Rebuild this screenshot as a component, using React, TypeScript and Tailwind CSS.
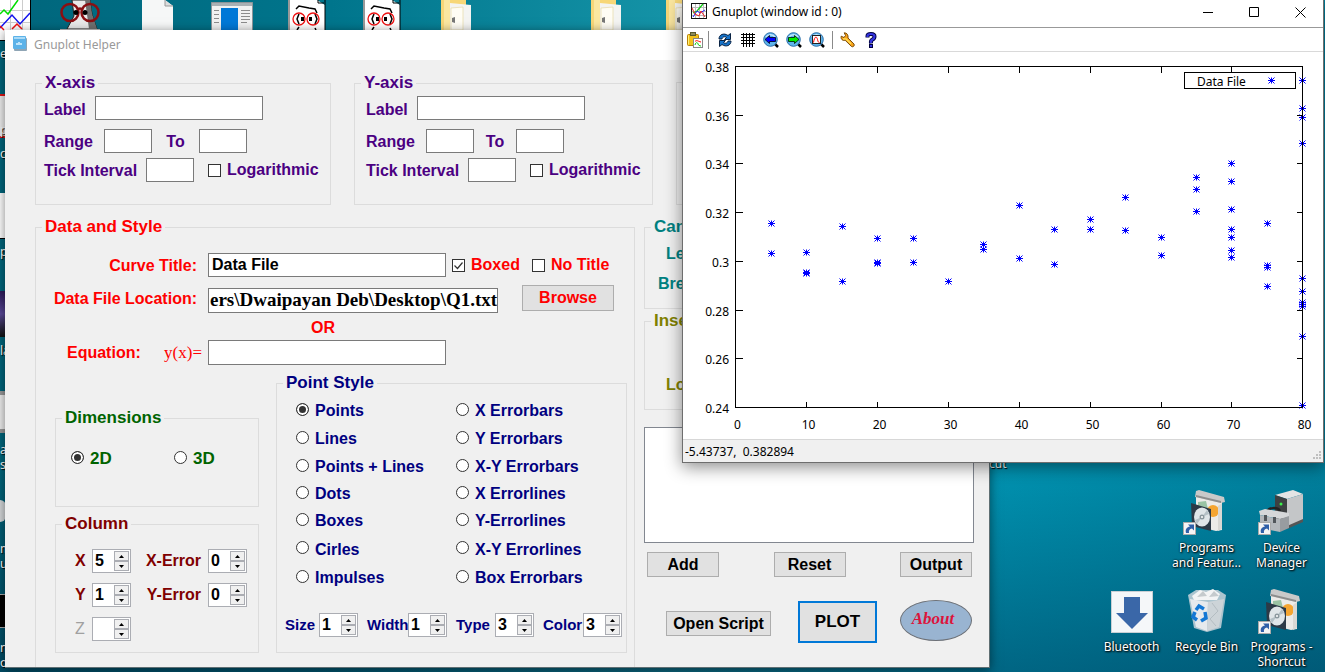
import { useState } from 'react'
import type { ReactNode } from 'react'
import { clsx } from 'clsx'

type Point = [x: number, y: number]

const DATA: Point[] = [
  [5, 0.3155], [5, 0.3032],
  [10, 0.3036], [10, 0.2954], [10, 0.295],
  [15, 0.3143], [15, 0.2917],
  [20, 0.3094], [20, 0.2995], [20, 0.2991],
  [25, 0.3094], [25, 0.2995],
  [30, 0.2917],
  [35, 0.3069], [35, 0.3049],
  [40, 0.3229], [40, 0.3012],
  [45, 0.3131], [45, 0.2987],
  [50, 0.3172], [50, 0.3131],
  [55, 0.3262], [55, 0.3127],
  [60, 0.3098], [60, 0.3024],
  [65, 0.3344], [65, 0.3295], [65, 0.3205],
  [70, 0.3402], [70, 0.3328], [70, 0.3213], [70, 0.3131], [70, 0.3098], [70, 0.3045], [70, 0.3016],
  [75, 0.3155], [75, 0.2983], [75, 0.2975], [75, 0.2897],
  [80, 0.3743], [80, 0.3628], [80, 0.3591], [80, 0.3484], [80, 0.293], [80, 0.2876],
  [80, 0.2831], [80, 0.2823], [80, 0.2815], [80, 0.2691], [80, 0.2408],
]

const X_TICKS = [0, 10, 20, 30, 40, 50, 60, 70, 80]
const Y_TICKS = [0.24, 0.26, 0.28, 0.3, 0.32, 0.34, 0.36, 0.38]

// Plot area inside the 640x387 canvas
const LEFT = 52.5
const RIGHT = 619.5
const TOP = 14.5
const BOTTOM = 355.5

// Both snap to pixel centres so the lines stay sharp
const toX = (v: number) => Math.round(LEFT - 0.15 + (v / 80) * (RIGHT - LEFT)) + 0.5
const toY = (v: number) => Math.round(BOTTOM - 0.5 - ((v - 0.24) / 0.14) * (BOTTOM - TOP)) + 0.5

const POINT_STYLES = [
  'Points', 'X Errorbars',
  'Lines', 'Y Errorbars',
  'Points + Lines', 'X-Y Errorbars',
  'Dots', 'X Errorlines',
  'Boxes', 'Y-Errorlines',
  'Cirles', 'X-Y Errorlines',
  'Impulses', 'Box Errorbars',
]

const SANS = "font-['Liberation_Sans',sans-serif]"
const UI = "font-['Noto_Sans','Open_Sans',sans-serif]"
const FIELD = 'border border-[#7a7a7a] bg-white px-[3px] text-base text-black outline-none'

/* ---------- form controls ---------- */

function Group({ title, className, children }: { title: string; className?: string; children?: ReactNode }) {
  return (
    <fieldset className={clsx('min-w-0 border border-[#dcdcdc]', className)}>
      <legend className="ml-[6px] px-[3px] text-[17px] leading-[20px] whitespace-nowrap">{title}</legend>
      {children}
    </fieldset>
  )
}

function Check({ label, defaultChecked, className }: { label: string; defaultChecked?: boolean; className?: string }) {
  return (
    <label className={clsx('flex items-center gap-[6px] whitespace-nowrap', className)}>
      <span className="grid">
        <input
          type="checkbox"
          defaultChecked={defaultChecked}
          className="peer col-start-1 row-start-1 size-[13px] appearance-none border border-[#333] bg-white"
        />
        <svg
          viewBox="0 0 13 13"
          className="pointer-events-none invisible col-start-1 row-start-1 size-[13px] peer-checked:visible"
          fill="none"
          stroke="#333"
          strokeWidth="1.2"
        >
          <path d="M2.5 6.5l3 3 5-6" />
        </svg>
      </span>
      {label}
    </label>
  )
}

function Radio({ name, label, defaultChecked, className }: { name: string; label: string; defaultChecked?: boolean; className?: string }) {
  return (
    <label className={clsx('flex items-center gap-[6px] whitespace-nowrap', className)}>
      <input
        type="radio"
        name={name}
        defaultChecked={defaultChecked}
        className="mb-1 size-[13px] appearance-none rounded-full border border-[#333] bg-white checked:bg-[#333] checked:shadow-[inset_0_0_0_2px_white]"
      />
      {label}
    </label>
  )
}

function Spinner({ id, initial }: { id: string; initial: number | null }) {
  const [value, setValue] = useState<number | null>(initial)
  const step = (d: number) => setValue((v) => Math.max(0, (v ?? 0) + d))
  return (
    <div className="flex h-6 w-[39px] border border-[#abadb3] bg-white">
      <input
        id={id}
        type="text"
        value={value ?? ''}
        onChange={(e) => setValue(Number(e.target.value) || 0)}
        className="w-0 min-w-0 flex-1 pl-[2px] text-base text-black outline-none"
      />
      <div className="flex w-4 flex-col py-px pr-px">
        {[1, -1].map((d) => (
          <button
            key={d}
            aria-label={d > 0 ? 'Increase' : 'Decrease'}
            onClick={() => step(d)}
            className="grid flex-1 place-items-center border border-[#abadb3] bg-[#f0f0f0]"
          >
            <svg viewBox="0 0 5 3" className="h-[3px] w-[5px]">
              <path d={d > 0 ? 'M0 3L2.500 0L5 3z' : 'M0 0L2.500 3L5 0z'} fill="#000" />
            </svg>
          </button>
        ))}
      </div>
    </div>
  )
}

function PushButton({ children, className }: { children: ReactNode; className?: string }) {
  return (
    <button className={clsx('border border-[#adadad] bg-[#e1e1e1] whitespace-nowrap', className)}>{children}</button>
  )
}

function AxisGroup({ axis, className, padClass, gapClass }: { axis: string; className: string; padClass: string; gapClass: string }) {
  return (
    <Group title={`${axis}-axis`} className={clsx('text-[#4b0082]', className)}>
      <div className={padClass}>
        <div className="mt-[3px] flex h-6 items-center">
          <label htmlFor={`${axis}-label`} className="w-[51px] pt-[3px]">Label</label>
          <input id={`${axis}-label`} type="text" className={clsx(FIELD, 'h-6 w-[168px]')} />
        </div>
        <div className="mt-[9px] flex h-6 items-center">
          <label htmlFor={`${axis}-from`} className="w-[60px] pt-[2px]">Range</label>
          <input id={`${axis}-from`} type="text" className={clsx(FIELD, 'h-6 w-12')} />
          <label htmlFor={`${axis}-to`} className={clsx('pt-[2px] text-center', gapClass)}>To</label>
          <input id={`${axis}-to`} type="text" className={clsx(FIELD, 'h-6 w-12')} />
        </div>
        <div className="mt-[5px] flex h-6 items-center">
          <label htmlFor={`${axis}-tick`} className="w-[102px] pt-[2px] whitespace-nowrap">Tick Interval</label>
          <input id={`${axis}-tick`} type="text" className={clsx(FIELD, 'h-6 w-12')} />
          <Check label="Logarithmic" className="ml-[14px]" />
        </div>
      </div>
    </Group>
  )
}

function ColumnRow({ axis, value, error }: { axis: string; value: number | null; error?: number }) {
  return (
    <div className="flex h-6 items-center">
      <label htmlFor={`col-${axis}`} className={clsx('w-[17px]', value === null && 'font-normal text-[#a0a0a0]')}>
        {axis}
      </label>
      <Spinner id={`col-${axis}`} initial={value} />
      {error !== undefined && (
        <>
          <label htmlFor={`err-${axis}`} className="w-[77px] pr-[7px] text-right whitespace-nowrap">{axis}-Error</label>
          <Spinner id={`err-${axis}`} initial={error} />
        </>
      )}
    </div>
  )
}

/* ---------- Gnuplot Helper window ---------- */

function HelperWindow() {
  return (
    <section
      className={clsx(
        'absolute top-[30px] left-[5px] flex h-[638px] w-[985px] flex-col overflow-hidden border-r border-b border-[#5f6f73] bg-[#f0f0f0] text-base font-bold leading-5 shadow-[0_2px_10px_rgba(0,0,0,0.5)]',
        SANS,
      )}
    >
      <header className={clsx('flex h-[30px] shrink-0 items-center bg-white pl-2 text-[12px] font-normal text-[#999]', UI)}>
        <svg viewBox="0 0 15 15" className="-mt-[3px] mr-[6px] size-[15px]">
          <rect x="1" y="2" width="13" height="13" rx="1" fill="#8fa5b5" />
          <rect x="0" y="0" width="13" height="13" rx="1" fill="#5cb2e8" />
          <rect x="1" y="1" width="11" height="2" fill="#a9daf7" />
          <path d="M3 9V7h2V6h2v1h2v2z" fill="#bfe4fa" />
        </svg>
        Gnuplot Helper
      </header>

      <div className="flex min-h-0 flex-1 flex-col pt-[13px] pl-[30px]">
        <div className="flex h-[132px] shrink-0">
          <AxisGroup axis="X" className="w-[296px]" padClass="pl-2" gapClass="w-[47px]" />
          <AxisGroup axis="Y" className="ml-[23px] w-[299px]" padClass="pl-[11px]" gapClass="w-[42px]" />
          <fieldset aria-label="Z-axis" className="mt-[9px] ml-[23px] w-[299px] border border-[#dcdcdc]" />
        </div>

        <div className="mt-3 flex min-h-0 flex-1">
          <Group title="Data and Style" className="w-[600px] border-b-0 text-[#ff0000]">
            <div className="mt-4 flex h-6 items-center">
              <label htmlFor="curve" className="w-[172px] pt-[2px] pr-[11px] text-right">Curve Title:</label>
              <input id="curve" type="text" defaultValue="Data File" className={clsx(FIELD, 'h-6 w-[238px] font-bold')} />
              <Check label="Boxed" defaultChecked className="ml-[6px]" />
              <Check label="No Title" className="ml-[12px]" />
            </div>
            <div className="mt-2 flex h-7">
              <label htmlFor="file" className="w-[172px] pt-[4px] pr-[11px] text-right">Data File Location:</label>
              <input
                id="file"
                type="text"
                defaultValue={'ers\\Dwaipayan Deb\\Desktop\\Q1.txt'}
                className="h-[25px] w-[290px] self-end border border-[#7a7a7a] bg-white pb-[2px] pl-px font-['Liberation_Serif',serif] text-[19px] leading-[20px] font-bold text-black outline-none"
              />
              <PushButton className="ml-6 h-[26px] w-[92px]">Browse</PushButton>
            </div>
            <p className="mt-[5px] h-5 pl-[275px]">OR</p>
            <div className="mt-[2px] flex h-[25px] items-center">
              <label htmlFor="equation" className="flex w-[172px] items-center justify-between pr-[6px] pl-[31px]">
                <span>Equation:</span>
                <span className="font-['Liberation_Serif',serif] text-[17px] font-normal">y(x)=</span>
              </label>
              <input id="equation" type="text" className={clsx(FIELD, 'h-[25px] w-[238px]')} />
            </div>

            <div className="mt-2 flex gap-[17px] pl-[19px]">
              <div className="flex w-[204px] flex-col gap-[7px] pt-[35px]">
                <Group title="Dimensions" className="h-[99px] text-[#006400]">
                  <div className="mt-[21px] flex h-5 items-center pl-[15px] text-[17px]">
                    <Radio name="dim" label="2D" defaultChecked className="w-[103px]" />
                    <Radio name="dim" label="3D" />
                  </div>
                </Group>
                <Group title="Column" className="h-[139px] text-[#800000]">
                  <div className="mt-[15px] flex flex-col gap-[10px] pl-[19px]">
                    <ColumnRow axis="X" value={5} error={0} />
                    <ColumnRow axis="Y" value={1} error={0} />
                    <ColumnRow axis="Z" value={null} />
                  </div>
                </Group>
              </div>

              <Group title="Point Style" className="h-[280px] w-[351px] text-[#000080]">
                <div className="mt-1 grid grid-cols-[160px_1fr] grid-rows-[28px_28px_28px_26px_28px_29px_28px] items-center pl-[19px]">
                  {POINT_STYLES.map((s, i) => (
                    <Radio key={s} name="style" label={s} defaultChecked={i === 0} />
                  ))}
                </div>
                <div className="mt-[21px] flex h-6 items-center gap-[9px] pl-2">
                  <div className="flex items-center">
                    <label htmlFor="size" className="w-[34px] text-[15px]">Size</label>
                    <Spinner id="size" initial={1} />
                  </div>
                  <div className="flex items-center">
                    <label htmlFor="width" className="w-[41px] text-[15px]">Width</label>
                    <Spinner id="width" initial={1} />
                  </div>
                  <div className="flex items-center">
                    <label htmlFor="type" className="w-[39px] text-[15px]">Type</label>
                    <Spinner id="type" initial={3} />
                  </div>
                  <div className="flex items-center">
                    <label htmlFor="color" className="w-[40px] text-[15px]">Color</label>
                    <Spinner id="color" initial={3} />
                  </div>
                </div>
              </Group>
            </div>
          </Group>

          <div className="ml-[9px] w-[330px]">
            <Group title="Can" className="h-[92px] text-[#008080]">
              <p className="mt-[7px] pl-[21px]">Len</p>
              <p className="mt-[10px] pl-[13px]">Brea</p>
            </Group>
            <Group title="Inse" className="mt-[2px] h-[99px] text-[#808000]">
              <p className="mt-[44px] pl-[21px]">Loc</p>
            </Group>
            <textarea aria-label="Curves" className="mt-[17px] block h-[116px] w-full resize-none border border-[#828790] bg-white outline-none" />
            <div className="mt-[9px] flex justify-between pr-[2px] pl-[3px]">
              <PushButton className="h-[25px] w-[72px]">Add</PushButton>
              <PushButton className="h-[25px] w-[72px]">Reset</PushButton>
              <PushButton className="h-[25px] w-[72px]">Output</PushButton>
            </div>
            <div className="mt-[23px] flex items-end pl-[22px]">
              <PushButton className="mb-[7px] h-[25px] w-[105px]">Open Script</PushButton>
              <button className="ml-[27px] h-[42px] w-[79px] border-2 border-[#0078d7] bg-[#e1e1e1] text-[17px]">PLOT</button>
              <button className="mb-[2px] ml-[23px] h-[41px] w-[72px] rounded-[50%] border border-[#6d7177] bg-[#99b4d1] pr-[6px] pb-1 font-['Liberation_Serif',serif] text-[17px] italic text-[#dc143c]">
                About
              </button>
            </div>
          </div>
        </div>
      </div>
    </section>
  )
}

/* ---------- Gnuplot graph window ---------- */

function Star({ x, y }: { x: number; y: number }) {
  return <path transform={`translate(${x} ${y})`} d="M-3.500 0h7M0-3v6M-3-3L3 3M-3 3L3-3" stroke="#00f" fill="none" />
}

function Plot() {
  return (
    <svg viewBox="0 0 640 387" className={clsx('block w-full bg-white text-[12px]', UI)}>
      {DATA.map(([x, y], i) => (
        <Star key={i} x={toX(x)} y={toY(y)} />
      ))}
      <g stroke="#000" fill="none" shapeRendering="crispEdges">
        <rect x={LEFT} y={TOP} width={RIGHT - LEFT} height={BOTTOM - TOP} />
        {X_TICKS.map((t) => (
          <path key={t} d={`M${toX(t)} ${BOTTOM}v-6M${toX(t)} ${TOP}v6`} />
        ))}
        {Y_TICKS.map((t) => (
          <path key={t} d={`M${LEFT} ${toY(t)}h7M${RIGHT} ${toY(t)}h-6`} />
        ))}
        <rect x="501.500" y="20.500" width="111" height="16" fill="#fff" />
      </g>
      {X_TICKS.map((t) => (
        <text key={t} x={toX(t) + 2} y="377" textAnchor="middle">{t}</text>
      ))}
      {Y_TICKS.map((t) => (
        <text key={t} x="46" y={toY(t) + 5} textAnchor="end">{t}</text>
      ))}
      <text x="514" y="34">Data File</text>
      <Star x={588.5} y={28.5} />
    </svg>
  )
}

function Lens({ children }: { children: ReactNode }) {
  return (
    <>
      <path d="M11.500 11.500L15 15" stroke="#000" strokeWidth="2.500" />
      <circle cx="7.500" cy="7.500" r="6.800" fill="#5db4ec" stroke="#2b6ea8" />
      <path d="M3 5a5.500 5.500 0 0 1 9 0" stroke="#c5e8fb" strokeWidth="1.500" fill="none" />
      {children}
    </>
  )
}

function ToolButton({ label, children }: { label: string; children: ReactNode }) {
  return (
    <button aria-label={label} className="grid h-6 w-[23px] place-items-center">
      <svg viewBox="0 0 16 16" className="size-4" fill="none">{children}</svg>
    </button>
  )
}

function Toolbar() {
  return (
    <div className="flex h-6 items-center border-b border-[#d9d9d9]">
      <ToolButton label="Copy to clipboard">
        <rect x="0.500" y="2.500" width="11" height="11" rx="1" fill="#f2c21b" stroke="#b98208" />
        <path d="M1.500 3.500v9" stroke="#fff27a" />
        <rect x="3.500" y="0.500" width="5" height="3" fill="#8b8b5a" stroke="#5a5a2a" />
        <rect x="6.500" y="6.500" width="9" height="9" fill="#fff" stroke="#888" />
        <path d="M8 9.500c2-2 3 0 6 .5" stroke="#f00" />
        <path d="M8 13c1-4 3-2 3-1s2 2 3 2" stroke="#0c0" />
      </ToolButton>
      <span className="mr-1 ml-[2px] h-[18px] w-px bg-[#8a8a8a]" />
      <ToolButton label="Replot">
        <path d="M2 7C2 2.500 7 .5 11 3.500L13.500 1.500V7.500H7.500l2-2C7.500 4 5.500 5 5 7z" fill="#1673c9" stroke="#0a2242" />
        <path d="M14 9c0 4.500-5 6.500-9 3.500L2.500 14.500V8.500H8.500l-2 2C8.500 12 10.500 11 11 9z" fill="#1673c9" stroke="#0a2242" />
      </ToolButton>
      <ToolButton label="Toggle grid">
        <path d="M1 2.500h14M1 5.500h14M1 8.500h14M1 11.500h14M3.500 1v14M6.500 1v14M9.500 1v14M12.500 1v14" stroke="#000" />
      </ToolButton>
      <ToolButton label="Previous zoom">
        <Lens>
          <path d="M2 7.500L6.500 3.500V5.500H12.500V9.500H6.500V11.500z" fill="#00f" stroke="#001" strokeWidth="0.800" />
        </Lens>
      </ToolButton>
      <ToolButton label="Next zoom">
        <Lens>
          <path d="M13 7.500L8.500 3.500V5.500H2.500V9.500H8.500V11.500z" fill="#0e0" stroke="#010" strokeWidth="0.800" />
        </Lens>
      </ToolButton>
      <ToolButton label="Autoscale">
        <Lens>
          <rect x="3.500" y="3.500" width="8" height="8" fill="#fff" stroke="#222" />
          <path d="M4.500 10.500c1-6 3-7 4-3s1 2 2 3" stroke="#f00" />
        </Lens>
      </ToolButton>
      <span className="mr-[3px] ml-1 h-[18px] w-px bg-[#8a8a8a]" />
      <ToolButton label="Options">
        <path d="M4.200.8L5.500 3.500 4 5.500 1.200 4.200C.5 7 2.500 9 5.200 8.300L11.500 14.500c1.500 1 3.500-.8 2.500-2.500L8 6C8.500 3 7 .8 4.200.8z" fill="#f7a21a" stroke="#6b3f00" strokeWidth="0.900" />
        <path d="M3 6.800h3l5 5" stroke="#ffe25a" strokeWidth="1.300" />
      </ToolButton>
      <ToolButton label="Help">
        <path d="M4.500 5.500V4q0-2 3.500-2t3.500 2.500q0 2-2 3T8 11.500" stroke="#000040" strokeWidth="4" />
        <path d="M4.500 5V4q0-2 3.500-2t3.500 2.500q0 2-2 3T8 11" stroke="#3434e0" strokeWidth="2.200" />
        <rect x="6.500" y="12.500" width="3" height="3" fill="#3434e0" stroke="#000040" />
      </ToolButton>
    </div>
  )
}

function GraphWindow() {
  return (
    <section
      className={clsx(
        'absolute top-0 left-[682px] w-[642px] border-x border-b border-[#6e6e6e] bg-white text-[12px] text-black shadow-[0_4px_16px_rgba(0,0,0,0.45)]',
        UI,
      )}
    >
      <header className="flex h-7 items-center border-b border-[#999] pl-2">
        <svg viewBox="0 0 16 16" className="mr-[5px] mb-[5px] size-4" fill="none">
          <rect x="0.500" y="0.500" width="15" height="15" fill="#fff" stroke="#111" />
          <path d="M4.500 1v14M8.500 1v14M12.500 1v14M1 4.500h14M1 8.500h14M1 12.500h14" stroke="#bbb" />
          <path d="M2 10L6 8 12 1" stroke="#1c1" strokeWidth="1.200" />
          <path d="M2 14l4-6 3 2 5-3" stroke="#22f" />
          <path d="M1 5l3 6 4 2 2-5 4 6" stroke="#e22" />
        </svg>
        <h1 className="flex-1 pb-1">Gnuplot (window id : 0)</h1>
        <button aria-label="Minimize" className="grid h-6 w-[46px] place-items-center self-start">
          <svg viewBox="0 0 11 11" className="size-[11px]" stroke="#000"><path d="M0 5.500h10" /></svg>
        </button>
        <button aria-label="Maximize" className="grid h-6 w-[46px] place-items-center self-start">
          <svg viewBox="0 0 11 11" className="size-[11px]" stroke="#000" fill="none"><path d="M.5.500h9v9h-9z" /></svg>
        </button>
        <button aria-label="Close" className="grid h-6 w-[46px] place-items-center self-start">
          <svg viewBox="0 0 11 11" className="size-[11px]" stroke="#000"><path d="M.5.500l10 10M10.500.500l-10 10" /></svg>
        </button>
      </header>
      <Toolbar />
      <Plot />
      <footer className="flex h-[23px] items-center justify-between border-t border-[#d7d7d7] bg-[#f0f0f0] pt-px pl-[2px]">
        <span className="whitespace-pre">-5.43737,  0.382894</span>
        <svg viewBox="0 0 9 9" className="mt-2 mr-px size-[9px]" fill="#bfbfbf">
          <path d="M6 0h2v2h-2zM3 3h2v2h-2zM6 3h2v2h-2zM0 6h2v2h-2zM3 6h2v2h-2zM6 6h2v2h-2z" />
        </svg>
      </footer>
    </section>
  )
}

/* ---------- desktop ---------- */

function ShortcutArrow() {
  return (
    <>
      <rect x="0.500" y="34.500" width="12" height="12" fill="#f4f4f4" stroke="#aaa" />
      <path d="M3 45c-1-4 1-6 4-6.500L5 36.500h6v6L9 40.500C6.500 41 5.500 42.500 6 45z" fill="#2f5fa8" />
    </>
  )
}

function ProgramsIcon() {
  return (
    <svg viewBox="0 0 48 48" className="size-12">
      <path d="M13 5l26 5v32l-6 1-20-5z" fill="#ecebe8" />
      <path d="M13 3l3-1 25 7 1 5-4 1-26-6z" fill="#c9c9c9" />
      <path d="M13 7l25 6v2L13 9z" fill="#8d8d8d" />
      <path d="M15 14l8-1 2 8-10 2z" fill="#9ac3a4" />
      <circle cx="30" cy="23" r="6" fill="#f5a531" />
      <path d="M35 18v25l4-2V15z" fill="#d9d8d4" />
      <path d="M8 15l20 6v22L9 38z" fill="#2c3946" />
      <ellipse cx="19" cy="29" rx="8" ry="9.500" fill="#dfe5e8" />
      <path d="M19 29l5-7 2 4zM19 29l-5 7-2-4z" fill="#b4c0c6" />
      <circle cx="19" cy="29" r="2.500" fill="#8b989e" />
      <circle cx="19" cy="29" r="1" fill="#fff" />
      <ShortcutArrow />
    </svg>
  )
}

function DeviceIcon() {
  return (
    <svg viewBox="0 0 48 48" className="size-12">
      <path d="M17 7L35 2l10 4-16 5z" fill="#e4e4e4" />
      <path d="M17 7l12 4v29l-12-5z" fill="#3d4042" />
      <path d="M29 11l16-5v27l-16 7z" fill="#c4c6c8" />
      <path d="M45 31v3l-16 7v-3z" fill="#555" />
      <circle cx="23" cy="16" r="1.500" fill="#3cf04a" />
      <path d="M9 24c1-5 11-5 13-1" stroke="#222" strokeWidth="2.500" fill="none" />
      <path d="M1 23l6-2 24 4v4l-9 2L2 27z" fill="#d5d7d9" />
      <path d="M2 27l20 4v13L2 40z" fill="#b3b7bb" />
      <path d="M22 31l9-3v12l-9 4z" fill="#989ca0" />
      <path d="M6 27h3v6H6zM15 29h3v6h-3z" fill="#50555a" />
      <ShortcutArrow />
    </svg>
  )
}

function BluetoothIcon() {
  return (
    <svg viewBox="0 0 48 48" className="size-12">
      <rect x="3.500" y="4.500" width="41" height="41" fill="#f5f7f9" stroke="#c9cfd4" />
      <path d="M16 10h16v16h8L24 42 8 26h8z" fill="#3a67a8" />
    </svg>
  )
}

function RecycleIcon() {
  return (
    <svg viewBox="0 0 48 48" className="size-12">
      <path d="M5 8l8-5 22 0 8 5-5 33-14 4-13-4z" fill="#c9d4da" opacity=".85" />
      <path d="M9 9l8-6 6 2 7-3 7 5-3 6H11z" fill="#f3f4f5" />
      <path d="M14 10l6-6 4 5zM26 10l5-6 5 5z" fill="#c5cacd" />
      <path d="M7 12l18 3-1 29-11-4z" fill="#e6eaed" />
      <path d="M25 15l16-3-5 28-12 4z" fill="#cdd4d8" />
      <path d="M29 16l6 8-8 8 6 7" stroke="#b4bdc2" fill="none" />
      <g fill="none" stroke="#1478d4" strokeWidth="3.500">
        <path d="M13 23l3-4 5 3" />
        <path d="M22 25l1 6-5 3" />
        <path d="M14 33l-4-3 2-5" />
      </g>
    </svg>
  )
}

function DesktopIcon({ icon, label, className }: { icon: ReactNode; label: string; className?: string }) {
  return (
    <a
      href="#"
      className={clsx('flex flex-col items-center text-center text-[12px] leading-[15px] whitespace-pre-line text-white [text-shadow:1px_1px_2px_#000,0_0_2px_#000]', className)}
    >
      {icon}
      <span className="mt-1">{label}</span>
    </a>
  )
}

function GlassesPage() {
  return (
    <svg viewBox="0 0 38 30" className="h-[30px] w-[38px]" fill="none">
      <path d="M0 0h29l8 5v25H0z" fill="#fff" />
      <path d="M1 0v30" stroke="#999" strokeWidth="2" />
      <path d="M30 0v3h6M37 0v30" stroke="#000" />
      <path d="M8 9l3-3 10 2 6 1 2 4M11 14l-2 5 2 5M27 14l2 5-2 5M9 30l2-3M27 28l1 2" stroke="#000" strokeWidth="1.500" />
      <circle cx="11" cy="19" r="6" stroke="#e11" strokeWidth="1.300" />
      <circle cx="25" cy="19" r="6" stroke="#e11" strokeWidth="1.300" />
      <path d="M13 17h3v4h-3zM21 17h3v4h-3z" fill="#000" />
    </svg>
  )
}

function Folder() {
  return (
    <svg viewBox="0 0 30 30" className="h-[30px] w-[30px]">
      <path d="M0 0h25v30H0z" fill="#f7d778" />
      <path d="M3 0h6v30H3z" fill="#fbe7a0" />
      <path d="M9 3L30 5v25H9z" fill="#f4f4f2" />
      <path d="M10 8l12-1v23H10z" fill="#fffdf5" stroke="#e5d9a8" strokeWidth="0.700" />
      <path d="M11 18l3-1v6l-3-1z" fill="#777" />
    </svg>
  )
}

function PlotThumb() {
  return (
    <svg viewBox="0 0 31 41" className="h-[41px] w-[31px]" fill="none">
      <path d="M0 0h30v40H0z" fill="#fff" />
      <path d="M10.500 0v40M22.500 0v40M0 10.500h30M0 22.500h30" stroke="#ccc" />
      <path d="M0 14l4-4 4 4L18 0" stroke="#0d0" strokeWidth="1.500" />
      <path d="M0 28L12 15l8 9 10-11" stroke="#11e" strokeWidth="1.500" />
      <path d="M0 26l4 4M12 29l5-5 5 5" stroke="#e11" strokeWidth="1.500" />
      <path d="M30.500 0v40.500H0" stroke="#000" />
    </svg>
  )
}

function Gnu() {
  return (
    <svg viewBox="0 0 42 30" className="h-[30px] w-[42px]" fill="none">
      <path d="M12 0h18l2 14 5 15H7l7-13z" fill="#e9e9e9" stroke="#222" />
      <path d="M25 0h5l2 14 5 15h-8z" fill="#6f6f6f" />
      <circle cx="10" cy="12.500" r="8.500" stroke="#8a0f12" strokeWidth="2.500" />
      <circle cx="30" cy="12.500" r="8.500" stroke="#8a0f12" strokeWidth="2.500" />
      <path d="M17 10q3-3 6 0" stroke="#8a0f12" strokeWidth="2.500" />
      <circle cx="16" cy="12.500" r="2.500" fill="#000" />
      <circle cx="25" cy="12.500" r="2.500" fill="#000" />
      <path d="M0 29.500h40" stroke="#bbb" />
    </svg>
  )
}

function BlankPage() {
  return (
    <svg viewBox="0 0 31 30" className="h-[30px] w-[31px]">
      <path d="M0 0h23l8 6v24H0z" fill="#f6f7f7" />
      <path d="M23 0v6h8" fill="#ddd" stroke="#999" />
    </svg>
  )
}

function AppWindowIcon() {
  return (
    <svg viewBox="0 0 42 28" className="h-[28px] w-[42px]">
      <path d="M.5.500h41v28H.5z" fill="#f1f1f1" stroke="#8b9499" />
      <path d="M1 1h40v3H1z" fill="#a9b0b4" />
      <path d="M10 6h17v22H10z" fill="#0078d7" />
      <path d="M3 8.500h5M3 12.500h5M3 16.500h5M3 20.500h5M30 8.500h9M30 11.500h9M30 14.500h9M30 17.500h9M30 20.500h6" stroke="#8c8c8c" />
    </svg>
  )
}

// Labels whose icons sit mostly behind the windows
const HIDDEN_LABELS = [
  { text: 'e', className: 'top-[46px]' },
  { text: 'p', className: 'top-[122px]' },
  { text: 'c', className: 'top-[146px]' },
  { text: 'p', className: 'top-[244px]' },
  { text: 'la', className: 'top-[343px]' },
  { text: 'a', className: 'top-[442px]' },
  { text: 'st', className: 'top-[457px]' },
  { text: 'm', className: 'top-[541px]' },
  { text: 'u', className: 'top-[556px]' },
  { text: 'n', className: 'top-[640px]' },
  { text: 'o', className: 'top-[655px]' },
]

function Desktop() {
  return (
    <div className={UI}>
      <div className="absolute top-0 left-0"><PlotThumb /></div>
      <div className="absolute top-0 left-[60px]"><Gnu /></div>
      <div className="absolute top-0 left-[142px]"><BlankPage /></div>
      <div className="absolute top-[2px] left-[211px]"><AppWindowIcon /></div>
      <div className="absolute top-0 left-[288px]"><GlassesPage /></div>
      <div className="absolute top-0 left-[363px]"><GlassesPage /></div>
      <div className="absolute top-0 left-[441px]"><Folder /></div>
      <div className="absolute top-0 left-[591px]"><Folder /></div>
      <div className="absolute top-0 left-[666px]"><Folder /></div>

      <div className="absolute top-[94px] left-0 h-[44px] w-[6px] border-y-2 border-[#e01818] bg-[#eee]" />
      <div className="absolute top-[193px] left-0 h-[46px] w-[6px] border-b border-black bg-white" />
      <div className="absolute top-[291px] left-0 h-[46px] w-[6px] bg-gradient-to-b from-[#2d1a5a] via-[#5b4a9a] to-[#111]" />
      <div className="absolute top-[391px] left-0 h-[42px] w-[6px] border-y-4 border-[#9a9a9a] bg-[#eee]" />
      <div className="absolute top-[500px] left-0 h-[22px] w-[6px] rounded-r-full bg-[#d5d8da]" />
      <div className="absolute top-[594px] left-0 h-[34px] w-[6px] border-y border-[#aaa] bg-black" />
      {HIDDEN_LABELS.map((l) => (
        <span
          key={l.className}
          className={clsx('absolute left-0 text-[12px] leading-[15px] text-white [text-shadow:1px_1px_1px_#000]', l.className)}
        >
          {l.text}
        </span>
      ))}
      <span className="absolute top-[456px] left-[989px] text-[12px] leading-[15px] text-white [text-shadow:1px_1px_1px_#000]">cut</span>

      <div className="absolute top-[488px] left-[1094px] grid grid-cols-[75px_75px_75px] grid-rows-[99px_99px]">
        <DesktopIcon icon={<ProgramsIcon />} label={'Programs\nand Featur...'} className="col-start-2" />
        <DesktopIcon icon={<DeviceIcon />} label={'Device\nManager'} />
        <DesktopIcon icon={<BluetoothIcon />} label="Bluetooth" />
        <DesktopIcon icon={<RecycleIcon />} label="Recycle Bin" />
        <DesktopIcon icon={<ProgramsIcon />} label={'Programs -\nShortcut'} />
      </div>
    </div>
  )
}

export default function App() {
  return (
    <main className="relative h-screen w-full overflow-hidden bg-[linear-gradient(to_right,#00667c_0%,#00758c_25%,#1492a6_50%,#0092b0_75%,#007f9c_100%)]">
      {/* Darker towards the bottom */}
      <div className="absolute inset-0 bg-[linear-gradient(to_bottom,transparent_70%,rgba(0,30,60,0.38)_100%)]" />
      <Desktop />
      <HelperWindow />
      <GraphWindow />
    </main>
  )
}
